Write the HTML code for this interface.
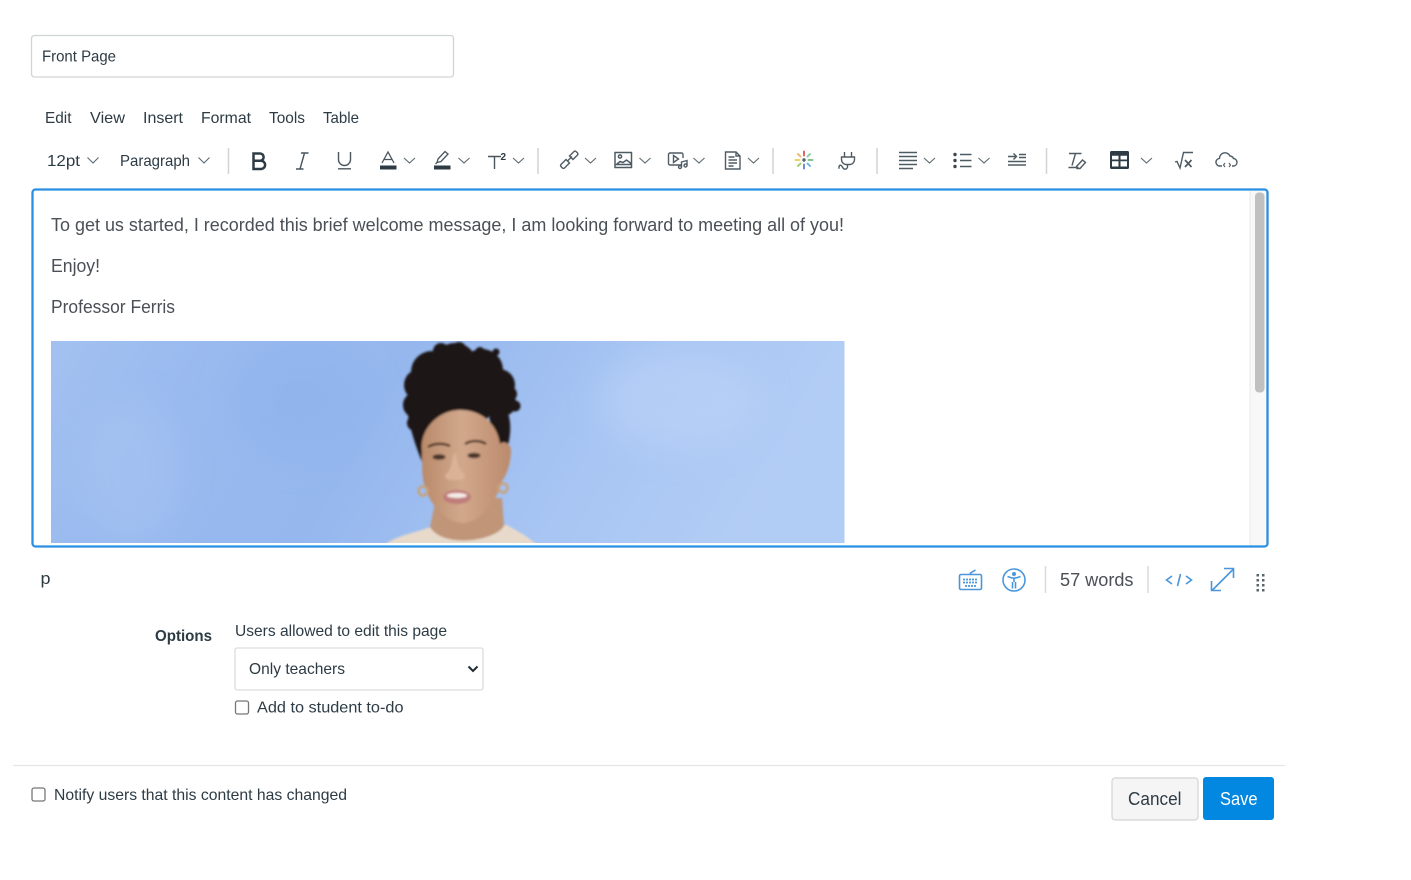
<!DOCTYPE html>
<html><head><meta charset="utf-8"><title>Front Page</title>
<style>
html,body{margin:0;padding:0;background:#fff;width:1411px;height:880px;overflow:hidden}
svg{display:block;filter:blur(.3px)}
text{font-family:"Liberation Sans",sans-serif;fill:#2d3b45}
.m{font-size:16px}
.b{font-size:18px;fill:#4a5056}
.ic{fill:none;stroke:#4f5b63;stroke-width:1.4}
.ch{fill:none;stroke:#5c6870;stroke-width:1.1}
.bl{fill:none;stroke:#4a96dc;stroke-width:1.6}
</style></head><body>
<svg width="1411" height="880" viewBox="0 0 1411 880" xmlns="http://www.w3.org/2000/svg">
<defs>
<linearGradient id="bg" x1="0" x2="1" y1="0" y2="0.15"><stop offset="0" stop-color="#a3c1f0"/><stop offset=".2" stop-color="#99baef"/><stop offset=".45" stop-color="#95b7ee"/><stop offset=".75" stop-color="#a8c5f3"/><stop offset="1" stop-color="#b2cdf5"/></linearGradient>
<linearGradient id="sk" x1="0" x2="1" y1="0" y2="0"><stop offset="0" stop-color="#b98a6a"/><stop offset=".45" stop-color="#d2a88c"/><stop offset="1" stop-color="#bb8a6c"/></linearGradient>
<clipPath id="ci"><rect x="51" y="341" width="793.500" height="202"/></clipPath>
<filter id="bl1" x="-10%" y="-10%" width="120%" height="120%"><feGaussianBlur stdDeviation="1.100"/></filter>
<filter id="bl2" x="-30%" y="-30%" width="160%" height="160%"><feGaussianBlur stdDeviation="16"/></filter>
</defs>
<rect width="1411" height="880" fill="#fff"/>

<!-- title -->
<rect x="31.500" y="35.500" width="422" height="41.500" rx="3" fill="#fff" stroke="#d0d4d7" stroke-width="1.300"/>
<text x="42" y="61.500" class="m" textLength="74" lengthAdjust="spacingAndGlyphs">Front Page</text>

<!-- menu -->
<text x="45" y="123" class="m" textLength="26.500" lengthAdjust="spacingAndGlyphs">Edit</text>
<text x="90" y="123" class="m" textLength="35" lengthAdjust="spacingAndGlyphs">View</text>
<text x="143" y="123" class="m" textLength="40" lengthAdjust="spacingAndGlyphs">Insert</text>
<text x="201" y="123" class="m" textLength="50" lengthAdjust="spacingAndGlyphs">Format</text>
<text x="269" y="123" class="m" textLength="36" lengthAdjust="spacingAndGlyphs">Tools</text>
<text x="323" y="123" class="m" textLength="36" lengthAdjust="spacingAndGlyphs">Table</text>

<!-- toolbar -->
<text x="47" y="166" class="m" textLength="33" lengthAdjust="spacingAndGlyphs">12pt</text>
<text x="120" y="166" class="m" textLength="70" lengthAdjust="spacingAndGlyphs">Paragraph</text>
<path class="ch" d="M87.500 157.500l5.500 5.500 5.500-5.500M198.500 157.500l5.500 5.500 5.500-5.500M404 158l5.500 5 5.500-5M458.500 158l5.500 5 5.500-5M513 158l5.500 5 5.500-5M585 158l5.500 5 5.500-5M639.500 158l5.500 5 5.500-5M693.500 158l5.500 5 5.500-5M748 158l5.500 5 5.500-5M924 158l5.500 5 5.500-5M978.500 158l5.500 5 5.500-5M1141 158l5.500 5 5.500-5"/>
<path d="M228.500 148v26M538 148v26M773 148v26M877 148v26M1046.500 148v26" stroke="#d0d4d7" stroke-width="1.500"/>

<!-- B -->
<path d="M253.500 153.500v15.500h7.500a4 4 0 0 0 0-8.200h-7.500h6.500a3.600 3.600 0 0 0 0-7.300z" fill="none" stroke="#2d3b45" stroke-width="2.500"/>
<!-- I -->
<path d="M301 153h7.500M296 169h7.500M304.500 153l-4.500 16" fill="none" stroke="#4a555d" stroke-width="1.400"/>
<!-- U -->
<path d="M338.500 152v7.500a6 6 0 0 0 12 0V152M338 168.800h13" fill="none" stroke="#4a555d" stroke-width="1.400"/>
<!-- A -->
<path d="M382 163l6-11 6 11M384 159.500h8" fill="none" stroke="#4a555d" stroke-width="1.300"/>
<rect x="380" y="165.500" width="16.500" height="4" fill="#2d3b45"/>
<!-- highlight -->
<path d="M437 162.500l1-3.500 7-7.500 3 2.500-7 7.500zM437 162.500l-1.500 1.500" fill="none" stroke="#4a555d" stroke-width="1.300"/>
<rect x="434" y="165.500" width="16.500" height="4" fill="#2d3b45"/>
<!-- T2 -->
<path d="M488 156.500h13M494.500 156.500V169" fill="none" stroke="#4a555d" stroke-width="1.400"/>
<text x="500.500" y="160" style="font-size:10px;font-weight:bold" fill="#4a555d">2</text>
<!-- link -->
<g class="ic"><path d="M561 164.500l5-5 3.500 3.500-5 5a1.500 1.500 0 0 1-2 0l-1.500-1.500a1.500 1.500 0 0 1 0-2zM570 155.500l4-4a1.500 1.500 0 0 1 2 0l1.500 1.500a1.500 1.500 0 0 1 0 2l-4.500 4.500-3.500-3.500zM567 161.500l5-5"/></g>
<!-- image -->
<g class="ic" style="stroke-width:1.500"><rect x="615" y="152.500" width="16.500" height="15"/><circle cx="620" cy="156.500" r="1.600"/><path d="M616.500 164.500l3.500-3 3 1 3.500-2.500 4 3v1.500h-14z"/></g>
<!-- media -->
<g class="ic"><path d="M682 165h-12a1.500 1.500 0 0 1-1.500-1.500v-9a1.500 1.500 0 0 1 1.500-1.500h11.500a1.500 1.500 0 0 1 1.500 1.500v3.500M673.500 155.500l5 3.500-5 3.500z"/><circle cx="680" cy="167" r="1.500"/><circle cx="685.500" cy="165.500" r="1.500"/><path d="M681.500 167v-5l5.500-1.500v5"/></g>
<!-- doc -->
<g class="ic"><path d="M725.500 152h10.500l4 4v13h-14.500zM736 152v4h4"/><path d="M728.500 157h6M728.500 160h8.500M728.500 163h8.500M728.500 166h5" stroke-width="1.600"/></g>
<!-- sparkle -->
<g fill="none" stroke-width="2" stroke-linecap="round">
<path d="M804 151.500v4" stroke="#e2685f"/>
<path d="M804 164.500v4" stroke="#6f8fd8"/>
<path d="M795.500 160h4" stroke="#efd06a"/>
<path d="M808.500 160h4" stroke="#7cc78e"/>
<path d="M798 154l2.500 2.500" stroke="#f0b878"/>
<path d="M810 154l-2.500 2.500" stroke="#8ed0a8"/>
<path d="M798 166l2.500-2.500" stroke="#a8d070"/>
<path d="M810 166l-2.500-2.500" stroke="#78b8e0"/>
<circle cx="804" cy="160" r=".7" stroke="#4f5b63"/>
</g>
<!-- plug -->
<g class="ic"><path d="M844.500 152v5M851.500 152v5M841.500 157h13v2.500a5 5 0 0 1-4 5h-5a5 5 0 0 1-4-5zM847.500 164.500v2.500a2.500 2.500 0 0 1-2.500 2.200c-1.500 0-2-1-2.500-2s-1-2-2-2-1.500 .8-1.500 2v1.500"/></g>
<!-- align -->
<path d="M899 152.500h18M899 156.500h18M899 160.500h18M899 164.500h18M899 168.500h14" stroke="#4f5b63" stroke-width="1.500"/>
<!-- list -->
<path d="M960 154.500h11.500M960 160.500h11.500M960 166.500h11.500" stroke="#4f5b63" stroke-width="1.400"/>
<circle cx="955" cy="154.500" r="1.700" fill="#3a464e"/><circle cx="955" cy="160.500" r="1.700" fill="#3a464e"/><circle cx="955" cy="166.500" r="1.700" fill="#3a464e"/>
<!-- indent -->
<g class="ic"><path d="M1008 156.500h8M1013.500 153.500l3 3-3 3M1019 154.500h7M1019 157.500h7M1008 161.500h18M1008 165h18"/></g>
<!-- clear format -->
<g class="ic"><path d="M1069 153.500h12.500M1075.500 153.500l-3.500 12M1068.500 167.500h10M1076.500 166.500l6-6.500 3 2.500-5.500 6h-3z"/></g>
<!-- table -->
<rect x="1110" y="151" width="19" height="18" rx="1.500" fill="#2d3b45"/>
<path d="M1112 159.500h6.500v-3.700h-6.500zM1120.500 159.500h6.500v-3.700h-6.500zM1112 166.500h6.500v-5.200h-6.500zM1120.500 166.500h6.500v-5.200h-6.500z" fill="#fff"/>
<!-- sqrt -->
<g class="ic"><path d="M1175 162l2-.5 3 6.500 3.500-15.500h9.500"/><path d="M1185 160l6.500 7M1191.500 160l-6.500 7" stroke-width="1.700"/></g>
<!-- cloud -->
<g class="ic"><path d="M1222 166h-2a3.800 3.800 0 0 1-.5-7.600 5.500 5.500 0 0 1 10.500-2.400 4 4 0 0 1 3.500 2.500 3.800 3.800 0 0 1 .5 7.500h-2"/><path d="M1225 163l-1.500 2 1.500 2M1229 163l1.500 2-1.500 2" stroke-width="1.100"/></g>

<!-- editor -->
<rect x="1250" y="191" width="17" height="355" fill="#f8f8f8"/>
<path d="M1250 191v355" stroke="#e8e8e8"/>
<rect x="1255" y="192.500" width="9.500" height="200" rx="4" fill="#c0c0c0"/>
<rect x="32.500" y="189.500" width="1235" height="357" rx="3" fill="none" stroke="#2a8fe0" stroke-width="2.300"/>

<text x="51" y="231" class="b" textLength="793" lengthAdjust="spacingAndGlyphs">To get us started, I recorded this brief welcome message, I am looking forward to meeting all of you!</text>
<text x="51" y="272" class="b" textLength="49" lengthAdjust="spacingAndGlyphs">Enjoy!</text>
<text x="51" y="313" class="b" textLength="124" lengthAdjust="spacingAndGlyphs">Professor Ferris</text>

<!-- picture -->
<g clip-path="url(#ci)">
<rect x="51" y="341" width="794" height="202" fill="url(#bg)"/>
<g filter="url(#bl2)" opacity=".55">
<ellipse cx="130" cy="470" rx="50" ry="70" fill="#a8c4f2"/>
<ellipse cx="300" cy="400" rx="70" ry="60" fill="#8fb2ec"/>
<ellipse cx="680" cy="400" rx="80" ry="50" fill="#bcd4f7"/>
</g>
<g filter="url(#bl1)">
<!-- shoulders -->
<path d="M385 545c8-8 28-12 46-18l76-2c10 6 22 12 30 20z" fill="#e8dacb"/>
<!-- neck -->
<path d="M436 498h66l2 28c-10 16-62 22-74 1z" fill="#c09578"/>
<!-- hair -->
<g fill="#1e1613">
<circle cx="432" cy="372" r="21"/><circle cx="455" cy="365" r="22"/><circle cx="482" cy="370" r="21"/>
<circle cx="420" cy="385" r="16"/><circle cx="499" cy="385" r="16"/><circle cx="416" cy="405" r="13"/><circle cx="503" cy="403" r="13"/>
<circle cx="510" cy="394" r="7"/><circle cx="515" cy="406" r="5.500"/>
<circle cx="441" cy="351" r="8"/><circle cx="459" cy="349" r="7"/><circle cx="480" cy="352" r="5"/><circle cx="496" cy="352" r="3.500"/>
<circle cx="415" cy="423" r="8"/><circle cx="460" cy="395" r="36"/>
<path d="M408 415c2 14 8 32 14 47l14-30 6-24zM488 405l20 8c4 12 2 26-1 36l-6 12-10-28z"/>
</g>
<!-- face -->
<path d="M422 452c-3-22 16-42 38-42s37 14 40 34c4-4 10 0 11 5 0 12-3 24-9 32-3 14-14 30-26 38-10 6-21 5-30-2-12-8-20-22-23-38-1-8-1-18-1-27z" fill="url(#sk)"/>
<path d="M448 472c5-5 3-14 7-20 3 6 2 16 7 20 4 3 4 7-2 8h-10c-6-1-6-5-2-8z" fill="#dcb296"/>
<!-- brows -->
<path d="M428 447c6-4 16-4 22-1" fill="none" stroke="#3a2418" stroke-width="2.200"/>
<path d="M465 444c6-4 15-4 21 0" fill="none" stroke="#3a2418" stroke-width="2.200"/>
<!-- eyes -->
<ellipse cx="439" cy="457" rx="6.500" ry="2.800" fill="#4a3429"/>
<ellipse cx="474" cy="455.500" rx="6.500" ry="2.800" fill="#4a3429"/>
<!-- mouth -->
<ellipse cx="457" cy="497" rx="14" ry="7" fill="#c07d7a"/>
<ellipse cx="457" cy="495.500" rx="10" ry="2.500" fill="#f6ece7"/>
<!-- earrings -->
<circle cx="423" cy="491" r="4.500" fill="none" stroke="#c9a27a" stroke-width="2.500"/>
<circle cx="503" cy="488" r="4.500" fill="none" stroke="#c9a27a" stroke-width="2.500"/>
</g>
</g>

<!-- status bar -->
<text x="40.500" y="584" class="m" style="font-size:17px" textLength="10" lengthAdjust="spacingAndGlyphs">p</text>
<!-- keyboard -->
<g class="bl"><rect x="959.500" y="574.500" width="22" height="15" rx="1.500"/><path d="M970.500 574.500v-1.500l5-3"/><path d="M963 579.500h15M963 582.500h15M965 586h11" stroke-width="1.800" stroke-dasharray="2 1"/></g>
<!-- a11y -->
<circle cx="1014" cy="580" r="11" class="bl" stroke-width="1.800"/>
<circle cx="1014" cy="574" r="2" fill="#4a96dc"/>
<path d="M1007.500 576.500l4.500 1.500h4l4.500-1.500M1014 578v4M1012.500 582v6.500M1015.500 582v6.500" class="bl" stroke-width="2"/>
<path d="M1045.500 566v27M1148 566v27" stroke="#d9dcde" stroke-width="1.500"/>
<text x="1060" y="586" style="font-size:18px;fill:#4a5056" textLength="73.500" lengthAdjust="spacingAndGlyphs">57 words</text>
<!-- code -->
<path d="M1172 576l-5.500 4 5.500 4M1186 576l5.500 4-5.500 4M1180.500 574l-3 12" class="bl"/>
<!-- expand -->
<path d="M1212 590.500l21.500-21.500M1211.500 581v9.500h9.500M1224 568.500h9.500v9.500" class="bl" stroke-width="1.900"/>
<!-- grip -->
<g fill="#5a646b"><rect x="1256.500" y="574" width="2.500" height="2.500"/><rect x="1262" y="574" width="2.500" height="2.500"/><rect x="1256.500" y="579" width="2.500" height="2.500"/><rect x="1262" y="579" width="2.500" height="2.500"/><rect x="1256.500" y="584" width="2.500" height="2.500"/><rect x="1262" y="584" width="2.500" height="2.500"/><rect x="1256.500" y="589" width="2.500" height="2.500"/><rect x="1262" y="589" width="2.500" height="2.500"/></g>

<!-- options -->
<text x="155" y="641" class="m" style="font-weight:bold" textLength="57" lengthAdjust="spacingAndGlyphs">Options</text>
<text x="235" y="636" class="m" textLength="212" lengthAdjust="spacingAndGlyphs">Users allowed to edit this page</text>
<rect x="235" y="648" width="248" height="42" rx="2" fill="#fff" stroke="#d0d4d7" stroke-width="1.100"/>
<text x="249" y="674" class="m" textLength="96" lengthAdjust="spacingAndGlyphs">Only teachers</text>
<path d="M468.500 666.500l4.500 4.500 4.500-4.500" fill="none" stroke="#1f2a31" stroke-width="2"/>
<rect x="235.500" y="701" width="13" height="13" rx="2" fill="#fff" stroke="#767676" stroke-width="1.300"/>
<text x="257" y="712.500" class="m" textLength="146.500" lengthAdjust="spacingAndGlyphs">Add to student to-do</text>

<!-- footer -->
<path d="M13 765.500h1272" stroke="#e6e6e6" stroke-width="1.200"/>
<rect x="32" y="788" width="13" height="13" rx="2" fill="#fff" stroke="#767676" stroke-width="1.300"/>
<text x="54" y="800" class="m" textLength="293" lengthAdjust="spacingAndGlyphs">Notify users that this content has changed</text>
<rect x="1112" y="778" width="86" height="42" rx="3" fill="#f5f5f5" stroke="#d0d4d7" stroke-width="1.200"/>
<text x="1128" y="805" style="font-size:18px" textLength="53.500" lengthAdjust="spacingAndGlyphs">Cancel</text>
<rect x="1203" y="777" width="71" height="43" rx="3" fill="#0288e0"/>
<text x="1220" y="805" style="font-size:18px;fill:#fff" textLength="37.500" lengthAdjust="spacingAndGlyphs">Save</text>
</svg>
</body></html>
